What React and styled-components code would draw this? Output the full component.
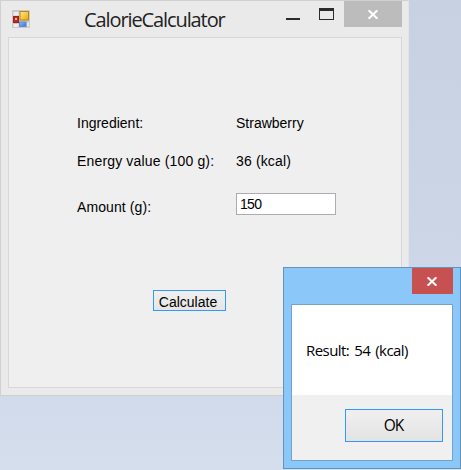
import React from "react";
import styled, { createGlobalStyle } from "styled-components";

const GlobalStyle = createGlobalStyle`
  * { box-sizing: border-box; }
  html, body { margin: 0; padding: 0; }
  body { overflow: hidden; }
  svg { display: block; }
  button { appearance: none; border-radius: 0; }
`;

const Desktop = styled.div`
  position: relative;
  width: 461px;
  height: 470px;
  overflow: hidden;
  background: linear-gradient(180deg, #c8d1e2 0%, #ccd5e5 45%, #d1daea 82%, #d5deed 100%);
`;

const MainWindow = styled.section`
  position: absolute;
  left: 0;
  top: 0;
  width: 409px;
  height: 396px;
  display: flex;
  flex-direction: column;
  padding: 0 6px 7px 7px;
  background: #eaeaea;
  border: 1px solid #d0d0d0;
  border-right-color: #e4e4e4;
`;

const TitleBar = styled.header`
  display: flex;
  align-items: flex-start;
  height: 36px;
  flex: none;
`;

const AppIcon = styled.svg`
  margin: 9px 0 0 4px;
  flex: none;
`;

const Title = styled.h1`
  width: 160px;
  margin: 5px 0 0 54px;
  font: 400 20px/28px "Open Sans", "Noto Sans", sans-serif;
  letter-spacing: -1.1px;
  color: #222;
  white-space: nowrap;
`;

const WindowControls = styled.div`
  display: flex;
  align-items: flex-start;
  margin-left: auto;
`;

const ControlIcon = styled.svg`
  flex: none;
  margin: 7px ${(p) => p.$gap}px 0 0;
`;

const CloseButton = styled.button`
  display: flex;
  align-items: center;
  justify-content: center;
  width: ${(p) => p.$width}px;
  height: 26px;
  padding: 0 1px 0 0;
  border: 0;
  background: ${(p) => p.$color};
`;

const Client = styled.div`
  flex: 1;
  padding: 75px 0 0 68px;
  background: #efefef;
  border: 1px solid #d7d7d7;
`;

const Form = styled.div`
  display: grid;
  grid-template-columns: 159px 100px;
  grid-template-rows: 20px 20px 26px;
  row-gap: 18px;
  align-items: center;
`;

const Label = styled.span`
  font: 400 14px/20px "Liberation Sans", Arial, sans-serif;
  letter-spacing: ${(p) => p.$spacing || 0}px;
  color: #000;
  white-space: nowrap;
  ${(p) => p.$low && "align-self: end; margin-bottom: -2px;"}
`;

const AmountInput = styled.input`
  align-self: end;
  width: 100px;
  height: 22px;
  padding: 0 2px 1px 3px;
  border: 1px solid #abadb3;
  border-radius: 0;
  outline: 0;
  background: #fff;
  color: #000;
  font: 400 14px/18px "Liberation Sans", Arial, sans-serif;
  letter-spacing: -0.7px;
`;

const CalculateButton = styled.button`
  display: block;
  width: 73px;
  height: 21px;
  margin: 75px 0 0 76px;
  padding: 2px 0 0;
  border: 1px solid #3399ff;
  background: linear-gradient(#f0f0f0, #e5e5e5);
  color: #000;
  font: 400 14px/16px "Liberation Sans", Arial, sans-serif;
  text-indent: -3px;
`;

const Dialog = styled.section`
  position: absolute;
  left: 283px;
  top: 267px;
  width: 178px;
  height: 202px;
  display: flex;
  flex-direction: column;
  padding: 0 7px 7px;
  background: #8cc7fa;
  border: 1px solid #6295bd;
`;

const DialogBar = styled.header`
  display: flex;
  justify-content: flex-end;
  flex: none;
  height: 36px;
`;

const DialogBody = styled.div`
  flex: 1;
  display: flex;
  flex-direction: column;
  border: 1px solid #72a3cb;
`;

const Message = styled.p`
  height: 90px;
  margin: 0;
  padding: 34px 0 0 14px;
  background: #fff;
  color: #000;
  font: 400 15px/22px "Open Sans", "Noto Sans", sans-serif;
  letter-spacing: -0.55px;
  word-spacing: 1.6px;
  white-space: nowrap;
`;

const DialogFooter = styled.footer`
  flex: 1;
  display: flex;
  justify-content: flex-end;
  align-items: flex-start;
  padding: 14px 9px 0 0;
  background: #f0f0f0;
`;

const OkButton = styled.button`
  width: 98px;
  height: 33px;
  padding: 0 1px 1px 0;
  border: 1px solid #3399ff;
  background: linear-gradient(#f0f0f0, #e3e3e3);
  color: #000;
  font: 400 15.5px/30px "Open Sans", "Noto Sans", sans-serif;
  letter-spacing: -1px;
`;

function CloseGlyph() {
  return (
    <svg width="12" height="9" viewBox="0 0 12 9">
      <path d="M1.6 0.3L10.4 8.7M10.4 0.3L1.6 8.7" stroke="#fff" strokeWidth="2.1" />
    </svg>
  );
}

function FormIcon() {
  return (
    <AppIcon width="18" height="19" viewBox="0 0 18 19">
      <defs>
        <linearGradient id="gold" x2="1" y2="1">
          <stop stopColor="#ffe98c" />
          <stop offset="1" stopColor="#eba800" />
        </linearGradient>
        <linearGradient id="blue" x2="1" y2="1">
          <stop stopColor="#94bdf8" />
          <stop offset="1" stopColor="#2f6fdc" />
        </linearGradient>
      </defs>
      <rect width="18" height="18" rx="1" fill="#c9c9c9" />
      <rect x="1.5" y="2" width="5" height="3.5" fill="#ededed" />
      <rect x="1.5" y="14" width="5" height="3" fill="#ededed" />
      <rect x="15" y="12.5" width="2" height="4" fill="#e8e8e8" />
      <rect x="1.5" y="6.5" width="5" height="6" fill="#c42b20" stroke="#9c2118" />
      <rect x="3" y="8" width="2" height="2" fill="#f4b2a6" />
      <rect x="8" y="1.5" width="8.5" height="8.5" fill="url(#gold)" stroke="#b98517" />
      <rect x="7.5" y="12" width="6.5" height="4.5" fill="url(#blue)" stroke="#5e8bd3" />
    </AppIcon>
  );
}

export default function App() {
  return (
    <>
      <GlobalStyle />
      <Desktop>
        <MainWindow>
          <TitleBar>
            <FormIcon />
            <Title>CalorieCalculator</Title>
            <WindowControls>
              <ControlIcon $gap={19} width="14" height="12">
                <path d="M0 10h14v2H0z" fill="#2b2b2b" />
              </ControlIcon>
              <ControlIcon $gap={10} width="15" height="12">
                <path d="M0 0h15v12H0zM1 3v8h13V3z" fill="#2b2b2b" fillRule="evenodd" />
              </ControlIcon>
              <CloseButton $width={58} $color="#bcbcbc" aria-label="Close">
                <CloseGlyph />
              </CloseButton>
            </WindowControls>
          </TitleBar>
          <Client>
            <Form>
              <Label>Ingredient:</Label>
              <Label>Strawberry</Label>
              <Label $spacing={0.16}>Energy value (100 g):</Label>
              <Label $spacing={0.15}>36 (kcal)</Label>
              <Label $low $spacing={0.1}>Amount (g):</Label>
              <AmountInput defaultValue="150" />
            </Form>
            <CalculateButton>Calculate</CalculateButton>
          </Client>
        </MainWindow>
        <Dialog>
          <DialogBar>
            <CloseButton $width={41} $color="#c75050" aria-label="Close">
              <CloseGlyph />
            </CloseButton>
          </DialogBar>
          <DialogBody>
            <Message>Result: 54 (kcal)</Message>
            <DialogFooter>
              <OkButton>OK</OkButton>
            </DialogFooter>
          </DialogBody>
        </Dialog>
      </Desktop>
    </>
  );
}
